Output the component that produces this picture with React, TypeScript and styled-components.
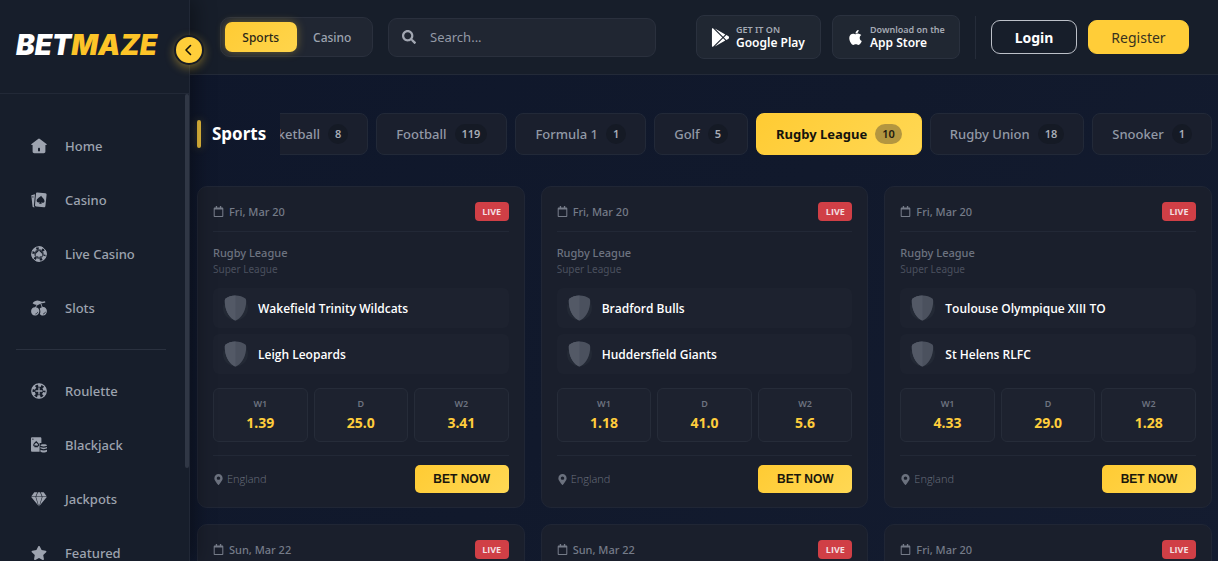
import React from "react";
import styled, { createGlobalStyle, css } from "styled-components";
import { FaApple, FaGooglePlay, FaMapMarkerAlt, FaRegCalendar, FaSearch, FaStar } from "react-icons/fa";

const GlobalStyle = createGlobalStyle`
  *, *::before, *::after { box-sizing: border-box; }
  body {
    margin: 0;
    background: #10182b;
    color: #fff;
    font-family: "Noto Sans", "Open Sans", sans-serif;
    overflow: hidden;
  }
  button, input { font-family: inherit; }
  button { cursor: pointer; }
  a { color: inherit; text-decoration: none; }
  h1, p, ul { margin: 0; padding: 0; }
  svg { display: block; flex: none; }
`;

const Shell = styled.div`
  display: flex;
  height: 100vh;
`;

/* ---------- sidebar ---------- */

const Sidebar = styled.aside`
  position: relative;
  z-index: 2;
  display: flex;
  flex-direction: column;
  flex: none;
  width: 190px;
  background: #171e2b;
  border-right: 1px solid #212836;
  box-shadow: 4px 0 20px rgba(0, 0, 0, 0.4);
`;

const Brand = styled.a`
  display: flex;
  align-items: center;
  height: 94px;
  padding: 0 16px 4px;
  border-bottom: 1px solid #222937;
`;

const BrandName = styled.span`
  font: italic 900 28px/32px Inter, "Liberation Sans", sans-serif;
  color: #fff;
`;

const BrandAccent = styled.span`
  color: #fdc428;
`;

const CollapseButton = styled.button`
  position: absolute;
  top: 35px;
  right: -15px;
  display: grid;
  place-items: center;
  width: 30px;
  height: 30px;
  padding: 0;
  border: 2px solid #161b26;
  border-radius: 50%;
  background: #ffce3a;
  color: #16140c;
  box-shadow: 0 3px 10px rgba(255, 205, 56, 0.4);
`;

const NavScroller = styled.nav`
  position: relative;
  flex: 1;
  min-height: 0;
  overflow: hidden;
  padding: 25px 23px 0 16px;
`;

const ScrollThumb = styled.span`
  position: absolute;
  top: 0;
  right: 0;
  width: 4px;
  height: 80%;
  border-radius: 2px;
  background: #303745;
`;

const NavList = styled.ul`
  list-style: none;

  & + & {
    margin-top: 14px;
    padding-top: 14px;
    border-top: 1px solid #2a313f;
  }
`;

const NavLink = styled.a`
  display: flex;
  align-items: center;
  gap: 18px;
  height: 54px;
  padding-left: 15px;
  color: #9da3af;
  font-size: 13px;
  font-weight: 500;
`;

/* ---------- header ---------- */

const Content = styled.div`
  display: flex;
  flex-direction: column;
  flex: 1;
  min-width: 0;
  background: linear-gradient(135deg, #0f172b 0%, #11192c 50%, #141c30 100%);
`;

const Header = styled.header`
  display: flex;
  align-items: center;
  flex: none;
  height: 75px;
  padding: 0 29px 0 30px;
  background: #171e2a;
  border-bottom: 1px solid #232a38;
`;

const ModeSwitch = styled.div`
  display: flex;
  flex: none;
  width: 153px;
  padding: 4px;
  border: 1px solid #2a303d;
  border-radius: 10px;
  background: #202632;
`;

const ModeButton = styled.button<{ $active?: boolean }>`
  width: 72px;
  height: 30px;
  padding: 0;
  border: 0;
  border-radius: 7px;
  background: none;
  color: #9da3af;
  font-size: 12px;
  font-weight: 500;
  ${({ $active }) =>
    $active &&
    css`
      background: linear-gradient(135deg, #ffcb33, #ffd54c);
      color: #2b2618;
      box-shadow: 0 0 10px rgba(255, 205, 56, 0.35);
    `}
`;

const SearchBox = styled.label`
  display: flex;
  align-items: center;
  flex: 1;
  gap: 14px;
  height: 39px;
  margin: 0 40px 0 15px;
  padding: 0 13px;
  border: 1px solid #2a303d;
  border-radius: 9px;
  background: #202632;
  color: #a2a7b2;
`;

const SearchInput = styled.input`
  flex: 1;
  min-width: 0;
  padding: 0;
  border: 0;
  outline: 0;
  background: none;
  color: #fff;
  font-size: 13px;

  &::placeholder { color: #9399a5; opacity: 1; }
`;

const StoreGroup = styled.div`
  display: flex;
  flex: none;
  gap: 11px;
`;

const StoreLink = styled.a<{ $width: number }>`
  display: flex;
  align-items: center;
  gap: 6px;
  width: ${({ $width }) => $width}px;
  height: 44px;
  padding-left: 14px;
  border: 1px solid #2a313e;
  border-radius: 8px;
  background: #202732;
`;

const StoreText = styled.span`
  display: flex;
  flex-direction: column;
  white-space: nowrap;
`;

const StoreHint = styled.span`
  color: #a5aab4;
  font-size: 9px;
  font-weight: 600;
  line-height: 12px;
`;

const StoreName = styled.span`
  font-size: 12px;
  font-weight: 600;
  line-height: 14px;
`;

const AuthGroup = styled.div`
  display: flex;
  align-items: center;
  flex: none;
  gap: 11px;
  height: 43px;
  margin-left: 15px;
  padding-left: 15px;
  border-left: 1px solid #252c39;
`;

const AuthButton = styled.button<{ $primary?: boolean }>`
  width: ${({ $primary }) => ($primary ? 101 : 86)}px;
  height: 34px;
  padding: 0;
  border: 1px solid ${({ $primary }) => ($primary ? "#ffcd38" : "#bcc0c8")};
  border-radius: 9px;
  background: ${({ $primary }) => ($primary ? "#ffcd38" : "transparent")};
  color: ${({ $primary }) => ($primary ? "#37321f" : "#fff")};
  font-size: 14px;
  font-weight: ${({ $primary }) => ($primary ? 400 : 700)};
`;

/* ---------- sport filter ---------- */

const Page = styled.main`
  flex: 1;
  min-height: 0;
  overflow: hidden;
  padding: 38px 6px 0 7px;
`;

const FilterBar = styled.div`
  display: flex;
  align-items: center;
  margin-bottom: 31px;
`;

const PageTitle = styled.h1`
  display: flex;
  align-items: center;
  gap: 11px;
  flex: none;
  width: 83px;
  font-size: 17px;
  font-weight: 700;
  line-height: 24px;

  &::before {
    content: "";
    width: 4px;
    height: 28px;
    border-radius: 2px;
    background: #e8bd3d;
    box-shadow: 0 0 10px rgba(255, 205, 56, 0.3);
  }
`;

const TabStrip = styled.div`
  display: flex;
  justify-content: flex-end;
  flex: 1;
  gap: 8px;
  min-width: 0;
  overflow: hidden;
`;

const Tab = styled.button<{ $active?: boolean }>`
  display: flex;
  align-items: center;
  flex: none;
  gap: 8px;
  height: 42px;
  padding: 0 19px;
  border: 1px solid #222938;
  border-radius: 8px;
  background: #1a1f2d;
  color: #9299a6;
  font-size: 13px;
  font-weight: 500;
  white-space: nowrap;
  ${({ $active }) =>
    $active &&
    css`
      border-color: #ffce3b;
      background: linear-gradient(135deg, #ffcb33, #ffd854);
      color: #15130d;
      font-weight: 700;
    `}
`;

const TabCount = styled.span<{ $active?: boolean }>`
  padding: 0 7px;
  border-radius: 10px;
  background: ${({ $active }) => ($active ? "#b39640" : "#151a25")};
  color: ${({ $active }) => ($active ? "#1d1a10" : "#a8adb7")};
  font-size: 11px;
  font-weight: 600;
  line-height: 20px;
`;

/* ---------- match cards ---------- */

const Grid = styled.div`
  display: grid;
  grid-template-columns: repeat(3, minmax(0, 1fr));
  gap: 16px;
`;

const Card = styled.article`
  padding: 15px 15px 14px;
  border: 1px solid #202635;
  border-radius: 10px;
  background: #1a1f2c;
`;

const CardHead = styled.div`
  display: flex;
  align-items: center;
  justify-content: space-between;
  height: 30px;
  padding-bottom: 10px;
  border-bottom: 1px solid #222836;
`;

const MatchDate = styled.span`
  display: flex;
  align-items: center;
  gap: 5px;
  color: #757b88;
  font-size: 11px;
  font-weight: 500;
  line-height: 18px;
`;

const LiveBadge = styled.span`
  width: 34px;
  border-radius: 4px;
  background: #d03f46;
  color: #f3dfe1;
  font-family: "Open Sans", "Noto Sans", sans-serif;
  font-size: 9px;
  font-weight: 700;
  line-height: 19px;
  text-align: center;
`;

const Sport = styled.p`
  margin-top: 13px;
  color: #6d7380;
  font-size: 11px;
  font-weight: 500;
  line-height: 16px;
`;

const League = styled.p`
  margin-bottom: 11px;
  color: #4a505e;
  font-size: 10px;
  line-height: 16px;
`;

const Teams = styled.ul`
  display: grid;
  gap: 6px;
  list-style: none;
`;

const Team = styled.li`
  display: flex;
  align-items: center;
  gap: 10px;
  height: 40px;
  padding-left: 10px;
  border-radius: 6px;
  background: #1d222f;
  font-family: "Open Sans", "Noto Sans", sans-serif;
  font-size: 12px;
  font-weight: 600;
`;

const Odds = styled.div`
  display: grid;
  grid-template-columns: repeat(3, 1fr);
  gap: 6px;
  margin: 14px 0 13px;
`;

const Odd = styled.button`
  display: flex;
  flex-direction: column;
  align-items: center;
  height: 54px;
  padding: 7px 0 0;
  border: 1px solid #262c39;
  border-radius: 6px;
  background: #1d222f;
`;

const OddLabel = styled.span`
  color: #6d7380;
  font-size: 9px;
  font-weight: 600;
  line-height: 16px;
`;

const OddValue = styled.span`
  color: #ffcd3c;
  font-size: 14px;
  font-weight: 700;
  line-height: 22px;
`;

const CardFoot = styled.div`
  display: flex;
  align-items: center;
  justify-content: space-between;
  padding-top: 9px;
  border-top: 1px solid #222836;
`;

const Place = styled.span`
  display: flex;
  align-items: center;
  gap: 3px;
  color: #6b717e;
  font-family: "Open Sans", "Noto Sans", sans-serif;
  font-size: 11px;
  font-weight: 300;
  line-height: 14px;
`;

const BetButton = styled.button`
  width: 94px;
  height: 28px;
  padding: 0;
  border: 0;
  border-radius: 5px;
  background: linear-gradient(135deg, #ffcb33, #ffd854);
  color: #1a170d;
  font-family: "Liberation Sans", Arial, sans-serif;
  font-size: 12px;
  font-weight: 700;
`;

/* ---------- drawings ---------- */

const Glyph = ({ children }: { children: React.ReactNode }) => (
  <svg width="16" height="16" viewBox="0 0 16 16" fill="currentColor" aria-hidden="true">
    {children}
  </svg>
);

const INK = "#171e2b";
const SPADE = "M0-3.4C.7-2.200 3.300-.9 3.300.9 3.300 2.300 1.600 2.800.5 2L1.200 3.300H-1.200L-.5 2C-1.600 2.800-3.300 2.300-3.300.9-3.300-.9-.7-2.200 0-3.400Z";

const HomeIcon = () => (
  <Glyph>
    <path d="M7.1.9a1.4 1.4 0 0 1 1.8 0l6.6 5c.5.4.2 1.2-.4 1.2h-.7v6.4c0 1-.7 1.7-1.7 1.7H3.3c-1 0-1.700-.7-1.700-1.700V7.100H.9C.3 7.100 0 6.300.5 5.900Z" />
    <rect x="7" y="9.700" width="2" height="3.700" rx=".8" fill={INK} />
  </Glyph>
);

const CardsIcon = () => (
  <Glyph>
    <path d="M.3 3.200 4 2.200 2.900 13.200c-.1.800.2 1.500.8 2l-.8.100c-.7.100-1.300-.3-1.400-1Z" />
    <path d="M6.400.4 14.400 1.200c.8.100 1.300.7 1.200 1.500l-1.200 11.400c-.1.800-.7 1.300-1.500 1.200l-7.700-.8c-.8-.1-1.300-.7-1.200-1.500L5 1.600C5 .8 5.600.3 6.400.4Z" />
    <path d={SPADE} transform="translate(9.700 7.800) rotate(6) scale(1.200)" fill={INK} />
    <circle cx="1.900" cy="4.900" r=".6" fill={INK} />
  </Glyph>
);

const ChipSpadeIcon = () => (
  <Glyph>
    <circle cx="8" cy="8" r="7.300" fill="none" stroke="currentColor" />
    <circle cx="8" cy="8" r="6.200" fill="none" stroke="currentColor" strokeWidth="3" strokeDasharray="4 2.493" transform="rotate(20 8 8)" />
    <circle cx="8" cy="8" r="4.200" fill="none" stroke="currentColor" strokeWidth=".4" />
    <path d={SPADE} transform="translate(8 8)" />
  </Glyph>
);

const CherryIcon = () => (
  <Glyph>
    <path d="M1.600 3.200C3.400.6 6.400-.3 8.800 1c1.500.9 3.200.7 5.200.2l.4 1.400c-1.700.5-3 .7-4.200.5C8.600 5.300 4.400 5.600 1.600 3.200Z" />
    <path d="M9 2.500C6.700 4 5 6 4.300 8.300M9.600 2.500c.5 2 1.100 3.900 2 5.400" fill="none" stroke="currentColor" />
    <path d="M4.200 7.300c1 .3 3.400.2 4 2.800.6 2.800-1.200 5.500-4 5.500S0 13.600.1 11.100c.1-2.400 2.200-4.200 4.100-3.800Z" />
    <path d="M12 6.900c2.100-.2 3.900 1.600 3.900 4.100 0 2.400-1.600 4.500-4 4.500-1.300 0-2.300-.5-3-1.500.7-1.600.6-3.600-.2-5.200.8-1.300 2-1.800 3.300-1.900Z" />
    <path d="M4.800 14c.9-.2 1.600-.8 1.800-1.700M12.500 13.900c.9-.2 1.600-.8 1.800-1.700" fill="none" stroke={INK} strokeWidth=".8" strokeLinecap="round" />
  </Glyph>
);

const RouletteIcon = () => (
  <Glyph>
    <circle cx="8" cy="8" r="7.200" fill="none" stroke="currentColor" strokeWidth="1.300" />
    <circle cx="8" cy="8" r="5.800" fill="none" stroke="currentColor" strokeWidth="3" strokeDasharray="3.200 2.874" transform="rotate(14 8 8)" />
    <path d="M8 5v6M5 8h6" stroke="currentColor" strokeWidth="1.300" strokeLinecap="round" />
  </Glyph>
);

const BlackjackIcon = () => (
  <Glyph>
    <path d="M1.300.2h7.800c.8 0 1.300.5 1.300 1.300v4.600H8.600v8.600H1.300C.5 14.700 0 14.200 0 13.400V1.500C0 .7.5.2 1.300.2Z" />
    <path d={SPADE} transform="translate(5.200 7.300) scale(.75)" fill="none" stroke={INK} strokeWidth="1.500" />
    <circle cx="1.900" cy="2.200" r=".6" fill={INK} />
    <path d="M9.400 8.300c0-.7 1.500-1.100 3.300-1.100s3.300.4 3.300 1.100-1.500 1.200-3.300 1.200-3.300-.5-3.300-1.200ZM9.400 10.100c1.700.9 4.900.9 6.600 0v1.200c-1.500 1.100-5.100 1.100-6.600 0ZM9.400 12.700c1.700.9 4.900.9 6.600 0v1.800c-1.500 1.400-5.100 1.400-6.600 0Z" />
  </Glyph>
);

const DiamondIcon = () => (
  <Glyph>
    <path d="M3.300 1.200h3L4.500 5.600H.2ZM7 1.200h2l1.800 4.400H5.200ZM9.700 1.200h3l3.100 4.400h-4.300ZM.2 6.100h4.300l2.700 8.500ZM5.100 6.100h5.800L8 15.400ZM11.500 6.100h4.300l-7 8.500Z" />
  </Glyph>
);

const Shield = () => (
  <svg width="25" height="26" viewBox="0 0 25 26" aria-hidden="true">
    <circle cx="12.500" cy="13" r="12.500" fill="#232935" />
    <path d="M12.500.5c4 0 7.500 1.200 9.500 2.700 1 .8 1.200 1.500 1.200 3-.1 8.300-3.700 15.300-9 18.600-1.200.8-2.200.8-3.400 0C5.500 21.500 1.900 14.500 1.800 6.200c0-1.500.2-2.200 1.200-3C5 1.700 8.500.5 12.500.5Z" fill="#4b515e" />
    <path d="M12.500.5C8.500.5 5 1.700 3 3.200c-1 .8-1.200 1.500-1.200 3 .1 8.300 3.700 15.300 9 18.600.6.400 1.100.6 1.700.6Z" fill="#535966" />
  </svg>
);

/* ---------- data ---------- */

const primaryNav = [
  { label: "Home", icon: <HomeIcon /> },
  { label: "Casino", icon: <CardsIcon /> },
  { label: "Live Casino", icon: <ChipSpadeIcon /> },
  { label: "Slots", icon: <CherryIcon /> },
];

const gameNav = [
  { label: "Roulette", icon: <RouletteIcon /> },
  { label: "Blackjack", icon: <BlackjackIcon /> },
  { label: "Jackpots", icon: <DiamondIcon /> },
  { label: "Featured", icon: <FaStar size={16} /> },
];

const sports = [
  { name: "Basketball", count: 8 },
  { name: "Football", count: 119 },
  { name: "Formula 1", count: 1 },
  { name: "Golf", count: 5 },
  { name: "Rugby League", count: 10 },
  { name: "Rugby Union", count: 18 },
  { name: "Snooker", count: 1 },
];

const matches = [
  { date: "Fri, Mar 20", teams: ["Wakefield Trinity Wildcats", "Leigh Leopards"], odds: ["1.39", "25.0", "3.41"] },
  { date: "Fri, Mar 20", teams: ["Bradford Bulls", "Huddersfield Giants"], odds: ["1.18", "41.0", "5.6"] },
  { date: "Fri, Mar 20", teams: ["Toulouse Olympique XIII TO", "St Helens RLFC"], odds: ["4.33", "29.0", "1.28"] },
  { date: "Sun, Mar 22", teams: [], odds: [] },
  { date: "Sun, Mar 22", teams: [], odds: [] },
  { date: "Fri, Mar 20", teams: [], odds: [] },
];

const oddLabels = ["W1", "D", "W2"];

const NavItems = ({ items }: { items: typeof primaryNav }) => (
  <NavList>
    {items.map((item) => (
      <li key={item.label}>
        <NavLink href="#">
          {item.icon}
          {item.label}
        </NavLink>
      </li>
    ))}
  </NavList>
);

const MatchCard = ({ match }: { match: (typeof matches)[number] }) => (
  <Card>
    <CardHead>
      <MatchDate>
        <FaRegCalendar size={11} />
        {match.date}
      </MatchDate>
      <LiveBadge>LIVE</LiveBadge>
    </CardHead>
    {match.teams.length > 0 && (
      <>
        <Sport>Rugby League</Sport>
        <League>Super League</League>
        <Teams>
          {match.teams.map((team) => (
            <Team key={team}>
              <Shield />
              {team}
            </Team>
          ))}
        </Teams>
        <Odds>
          {match.odds.map((odd, i) => (
            <Odd key={oddLabels[i]}>
              <OddLabel>{oddLabels[i]}</OddLabel>
              <OddValue>{odd}</OddValue>
            </Odd>
          ))}
        </Odds>
        <CardFoot>
          <Place>
            <FaMapMarkerAlt size={11} />
            England
          </Place>
          <BetButton>BET NOW</BetButton>
        </CardFoot>
      </>
    )}
  </Card>
);

export default function App() {
  return (
    <>
      <GlobalStyle />
      <Shell>
        <Sidebar>
          <Brand href="#">
            <BrandName>
              BET<BrandAccent>MAZE</BrandAccent>
            </BrandName>
          </Brand>
          <CollapseButton aria-label="Collapse sidebar">
            <svg width="12" height="12" viewBox="0 0 12 12" fill="none" stroke="currentColor" strokeWidth="1.600" strokeLinecap="round" strokeLinejoin="round">
              <path d="M7.500 1.500 3 6l4.500 4.500" />
            </svg>
          </CollapseButton>
          <NavScroller>
            <NavItems items={primaryNav} />
            <NavItems items={gameNav} />
            <ScrollThumb />
          </NavScroller>
        </Sidebar>
        <Content>
          <Header>
            <ModeSwitch>
              <ModeButton $active>Sports</ModeButton>
              <ModeButton>Casino</ModeButton>
            </ModeSwitch>
            <SearchBox>
              <FaSearch size={14} />
              <SearchInput type="text" placeholder="Search..." aria-label="Search" />
            </SearchBox>
            <StoreGroup>
              <StoreLink href="#" $width={125}>
                <FaGooglePlay size={19} />
                <StoreText>
                  <StoreHint>GET IT ON</StoreHint>
                  <StoreName>Google Play</StoreName>
                </StoreText>
              </StoreLink>
              <StoreLink href="#" $width={128}>
                <FaApple size={17} />
                <StoreText>
                  <StoreHint>Download on the</StoreHint>
                  <StoreName>App Store</StoreName>
                </StoreText>
              </StoreLink>
            </StoreGroup>
            <AuthGroup>
              <AuthButton>Login</AuthButton>
              <AuthButton $primary>Register</AuthButton>
            </AuthGroup>
          </Header>
          <Page>
            <FilterBar>
              <PageTitle>Sports</PageTitle>
              <TabStrip>
                {sports.map((sport) => {
                  const active = sport.name === "Rugby League";
                  return (
                    <Tab key={sport.name} $active={active}>
                      {sport.name}
                      <TabCount $active={active}>{sport.count}</TabCount>
                    </Tab>
                  );
                })}
              </TabStrip>
            </FilterBar>
            <Grid>
              {matches.map((match, i) => (
                <MatchCard key={i} match={match} />
              ))}
            </Grid>
          </Page>
        </Content>
      </Shell>
    </>
  );
}
